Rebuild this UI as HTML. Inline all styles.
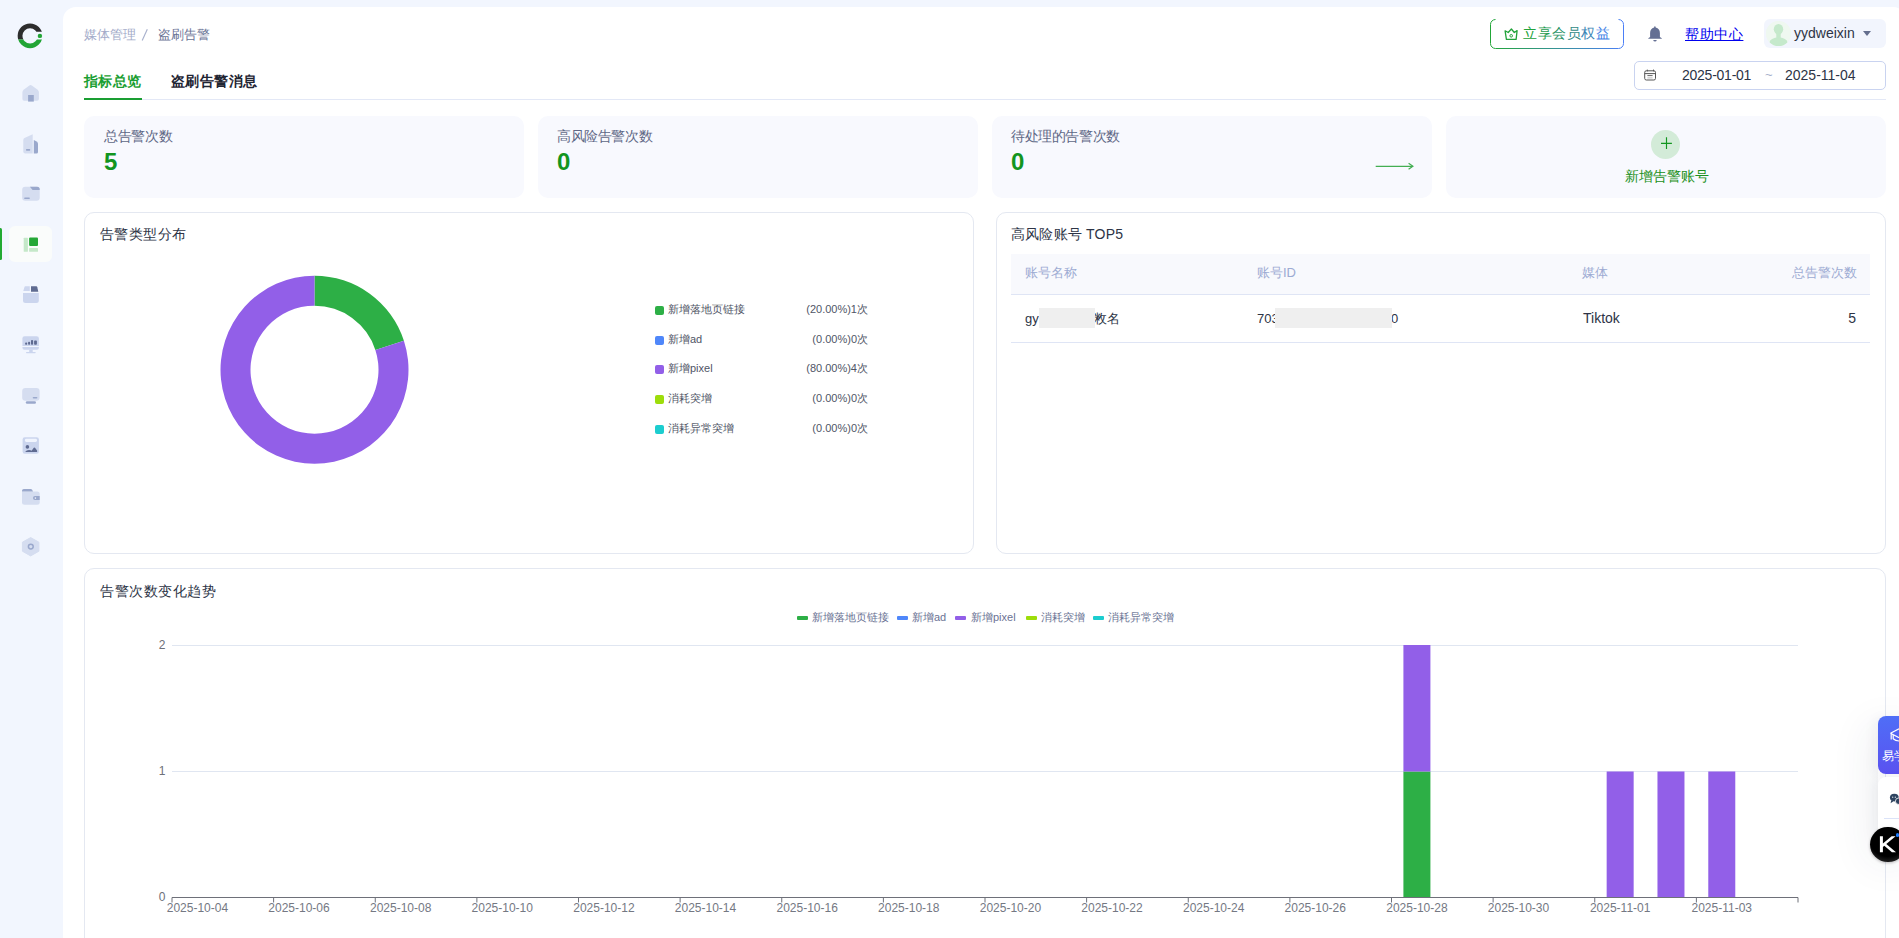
<!DOCTYPE html>
<html><head><meta charset="utf-8">
<style>
*{box-sizing:border-box;margin:0;padding:0}
html,body{width:1899px;height:938px;overflow:hidden}
body{background:#f2f6fe;font-family:"Liberation Sans",sans-serif;position:relative;color:#2d3446}
.a{position:absolute;white-space:nowrap}
.panel{position:absolute;left:63px;top:7px;width:1843px;height:1000px;background:#fff;border-radius:13px}
.card{position:absolute;background:#f8f9fe;border-radius:10px}
.box{position:absolute;background:#fff;border:1px solid #e4e8f1;border-radius:10px}
.t14{font-size:14px;line-height:14px}
.t13{font-size:13px;line-height:13px}
.t12{font-size:12px;line-height:12px}
.t11{font-size:11px;line-height:11px}
.xl{top:902px;width:80px;text-align:center;color:#747883}
.yl{right:1733.5px;color:#6e7079}
.lg{top:616px;width:11px;height:4px;border-radius:1px}
.lt{top:612px;color:#6b7394}
</style></head><body>

<!-- active item -->
<div class="a" style="left:9px;top:226px;width:43px;height:36px;background:#fafcfb;border-radius:6px"></div>
<div class="a" style="left:0;top:228px;width:2px;height:32px;background:#22aa33;border-radius:0 1.5px 1.5px 0"></div>

<!-- sidebar -->
<svg class="a" style="left:0;top:0" width="63" height="600" viewBox="0 0 63 600">
  <defs>
    <clipPath id="cd"><rect x="0" y="0" width="63" height="31.8"/><rect x="0" y="31.8" width="35" height="7.6"/></clipPath>
    <clipPath id="cg"><rect x="0" y="39.4" width="63" height="20"/></clipPath>
  </defs>
  <circle cx="30.05" cy="35.85" r="10" fill="none" stroke="#2d2d2d" stroke-width="4.8" clip-path="url(#cd)"/>
  <circle cx="30.05" cy="35.85" r="10" fill="none" stroke="#22a535" stroke-width="4.8" clip-path="url(#cg)"/>
  <circle cx="39.9" cy="35.9" r="2.2" fill="#22a535"/>
  <!-- home -->
  <path d="M22.4 92.4 Q22.4 90.8 23.6 89.8 L29.4 85.4 Q30.6 84.6 31.8 85.4 L37.7 89.8 Q38.9 90.8 38.9 92.4 L38.9 99 Q38.9 100.8 37.1 100.8 L24.2 100.8 Q22.4 100.8 22.4 99 Z" fill="#d5ddf0"/>
  <rect x="28.1" y="95" width="5.7" height="6.6" fill="#9aa8cc"/>
  <!-- building -->
  <path d="M23.3 140 Q23.3 138.6 24.5 138 L32.7 134.2 L32.7 153.6 L25.3 153.6 Q23.3 153.6 23.3 151.6 Z" fill="#d5ddf0"/>
  <path d="M33.8 139.9 L36.6 141.4 Q38 142.2 38 143.6 L38 152 Q38 153.6 36.4 153.6 L33.8 153.6 Z" fill="#9aa8cc"/>
  <rect x="26" y="149" width="4.2" height="1.7" rx="0.6" fill="#9aa8cc"/>
  <!-- folder -->
  <rect x="22.2" y="186.8" width="17.5" height="14" rx="3" fill="#d5ddf0"/>
  <path d="M29.9 186.8 L37.2 186.8 Q39.7 186.8 39.7 189.3 L39.7 189.9 L32.6 189.9 Z" fill="#9aa8cc"/>
  <rect x="24.1" y="197.4" width="5.8" height="1.7" rx="0.8" fill="#9aa8cc"/>
  <!-- active -->
  <rect x="23.7" y="237.7" width="4.2" height="14.1" rx="0.6" fill="#c5e8c9"/>
  <rect x="29.1" y="237.5" width="8.9" height="8.5" rx="1" fill="#25a737"/>
  <rect x="29.1" y="248" width="8.9" height="3.8" rx="0.6" fill="#c5e8c9"/>
  <!-- box -->
  <path d="M25.2 286.2 L29.8 286.2 L29.8 291.1 L23.3 291.1 L24.4 287.3 Q24.7 286.2 25.2 286.2 Z" fill="#cdd6ee"/>
  <path d="M31 286.2 L36.4 286.2 Q37 286.2 37.3 287.2 L38.3 291.8 L31 291.8 Z" fill="#5f6b91"/>
  <path d="M23 293.1 L38.8 293.1 L38.8 300.5 Q38.8 303 36.3 303 L25.5 303 Q23 303 23 300.5 Z" fill="#cbd5ee"/>
  <!-- monitor chart -->
  <path d="M24.6 336.2 L36.7 336.2 Q38.9 336.2 38.9 338.4 L38.9 345.9 L22.4 345.9 L22.4 338.4 Q22.4 336.2 24.6 336.2 Z" fill="#cbd5ee"/>
  <path d="M22.4 347.1 L38.9 347.1 L38.9 347.7 Q38.9 349.7 36.9 349.7 L24.4 349.7 Q22.4 349.7 22.4 347.7 Z" fill="#cbd5ee"/>
  <rect x="29.2" y="349.7" width="3.5" height="2.5" fill="#cbd5ee"/>
  <rect x="26" y="352" width="9.7" height="1.2" rx="0.6" fill="#cbd5ee"/>
  <rect x="25.1" y="342.6" width="2.1" height="2.2" rx="0.8" fill="#5f6b91"/>
  <rect x="28.1" y="341.8" width="2" height="3" rx="0.8" fill="#5f6b91"/>
  <rect x="31" y="340" width="2.1" height="4.8" rx="0.8" fill="#5f6b91"/>
  <rect x="34.1" y="340.6" width="2.8" height="4.2" rx="0.8" fill="#5f6b91"/>
  <!-- monitor -->
  <rect x="22.2" y="387.9" width="17.4" height="12.8" rx="3.2" fill="#d5ddf0"/>
  <rect x="32.7" y="396.9" width="4.7" height="1.6" rx="0.8" fill="#9aa8cc"/>
  <rect x="25.8" y="401.2" width="10.2" height="2.6" rx="1.3" fill="#9aa8cc"/>
  <!-- image -->
  <rect x="22.6" y="437.3" width="16.3" height="16.5" rx="2.2" fill="#cbd5ee"/>
  <rect x="24.9" y="438.8" width="12.1" height="3.1" rx="1.4" fill="#f1f5fe"/>
  <circle cx="27.4" cy="446.9" r="1.8" fill="#5f6b91"/>
  <path d="M25.1 451.9 Q26.5 450 29 450 Q30.8 450 31.6 450.8 L33.8 447.8 Q34.4 447.2 35 447.8 L37.1 450.6 L37.1 451.9 Z" fill="#5f6b91"/>
  <!-- wallet -->
  <path d="M22 491.4 L22 502.3 Q22 504.8 24.5 504.8 L37.2 504.8 Q39.7 504.8 39.7 502.3 L39.7 493.9 Q39.7 491.4 37.2 491.4 Z" fill="#d5ddf0"/>
  <path d="M22 491.4 L22 490.8 Q22 489 23.8 489 L30.8 489 Q31.6 489 32.1 489.8 L33 491.4 Z" fill="#9aa8cc"/>
  <path d="M35 496 L39.7 496 L39.7 500.1 L35 500.1 Q33 500.1 33 498.05 Q33 496 35 496 Z" fill="#9aa8cc"/>
  <circle cx="35.4" cy="498.1" r="0.8" fill="#eef2fb"/>
  <!-- hexagon -->
  <path d="M30.65 537.6 L38.9 542.2 L38.9 551.2 L30.65 555.9 L22.4 551.2 L22.4 542.2 Z" fill="#d5ddf0" stroke="#d5ddf0" stroke-width="1" stroke-linejoin="round"/>
  <circle cx="30.8" cy="546.6" r="2.4" fill="none" stroke="#9aa8cc" stroke-width="1.5"/>
</svg>

<!-- main panel -->
<div class="panel"></div>

<!-- breadcrumb -->
<div class="a t13" style="left:84px;top:27.5px;color:#a3abc9">媒体管理</div>
<svg class="a" style="left:138px;top:26px" width="14" height="18" viewBox="138 26 14 18"><path d="M147.3 29.2 L142.2 40.6" stroke="#a8b0cc" stroke-width="1.15"/></svg>
<div class="a t13" style="left:158px;top:27.5px;color:#6a7395">盗刷告警</div>

<!-- tabs -->
<div class="a t14" style="letter-spacing:0.45px;left:84px;top:73.5px;color:#1a9e32;font-weight:bold">指标总览</div>
<div class="a t14" style="letter-spacing:0.45px;left:171px;top:73.5px;color:#1f2533;font-weight:bold">盗刷告警消息</div>
<div class="a" style="left:84px;top:99px;width:1802px;height:1px;background:#e3e8f6"></div>
<div class="a" style="left:84px;top:98px;width:58px;height:2px;background:#1a9e32"></div>

<!-- header right -->
<svg class="a" style="left:1488px;top:17px" width="140" height="34" viewBox="1488 17 140 34">
  <defs><linearGradient id="bg1" x1="0" x2="1" y1="0" y2="0"><stop offset="0" stop-color="#22a638"/><stop offset="1" stop-color="#4b7ff7"/></linearGradient></defs>
  <path d="M1495.5 19.5 A5 5 0 0 0 1490.5 24.5 V43.5 A5 5 0 0 0 1495.5 48.5 H1618.5 A5 5 0 0 0 1623.5 43.5 V24.5 A5 5 0 0 0 1618.5 19.5" fill="none" stroke="url(#bg1)" stroke-width="1"/>
</svg>
<div class="a t14" style="left:1523px;top:26px;letter-spacing:0.5px"><span style="color:#22a23a">立</span><span style="color:#259b50">享</span><span style="color:#2a9366">会</span><span style="color:#318a86">员</span><span style="color:#3884b4">权</span><span style="color:#4181e6">益</span></div>

<div class="a t14" style="letter-spacing:0.6px;left:1685px;top:27px;color:#0000ee;text-decoration:underline">帮助中心</div>
<div class="a" style="left:1764px;top:19px;width:122px;height:29px;background:#f2f5fd;border-radius:6px"></div>
<div class="a" style="left:1766px;top:21px;width:25px;height:25px;border-radius:50%;background:#eef8ef"></div>
<div class="a t14" style="left:1794px;top:26px;color:#2d3446">yydweixin</div>
<div class="a" style="left:1863px;top:31px;width:0;height:0;border-left:4.5px solid transparent;border-right:4.5px solid transparent;border-top:5px solid #646e8e"></div>

<!-- date picker -->
<div class="a" style="left:1634px;top:61px;width:252px;height:29px;border:1px solid #c9d3f0;border-radius:5px"></div>
<div class="a t14" style="letter-spacing:-0.25px;left:1682px;top:68px;color:#2d3446">2025-01-01</div>
<div class="a t13" style="left:1765px;top:68px;color:#a6b0cc">~</div>
<div class="a t14" style="letter-spacing:0px;left:1785px;top:68px;color:#2d3446">2025-11-04</div>

<!-- stat cards -->
<div class="card" style="left:84px;top:116px;width:440px;height:82px"></div>
<div class="card" style="left:538px;top:116px;width:440px;height:82px"></div>
<div class="card" style="left:992px;top:116px;width:440px;height:82px"></div>
<div class="card" style="left:1446px;top:116px;width:440px;height:82px"></div>

<div class="a t14" style="letter-spacing:-0.33px;left:104px;top:128.5px;color:#5f6886">总告警次数</div>
<div class="a" style="left:104px;top:150px;font-size:24px;line-height:24px;font-weight:bold;color:#12951f">5</div>
<div class="a t14" style="letter-spacing:-0.38px;left:557px;top:128.5px;color:#5f6886">高风险告警次数</div>
<div class="a" style="left:557px;top:150px;font-size:24px;line-height:24px;font-weight:bold;color:#12951f">0</div>
<div class="a t14" style="letter-spacing:-0.38px;left:1011px;top:128.5px;color:#5f6886">待处理的告警次数</div>
<div class="a" style="left:1011px;top:150px;font-size:24px;line-height:24px;font-weight:bold;color:#12951f">0</div>

<!-- chart boxes -->
<div class="box" style="left:84px;top:212px;width:890px;height:342px"></div>
<div class="box" style="left:996px;top:212px;width:890px;height:342px"></div>
<div class="box" style="left:84px;top:568px;width:1802px;height:400px"></div>

<div class="a t14" style="letter-spacing:0.42px;left:100px;top:226.5px;color:#2d3446">告警类型分布</div>
<div class="a t14" style="letter-spacing:0.2px;left:1011px;top:226.5px;color:#2d3446">高风险账号 TOP5</div>
<div class="a t14" style="letter-spacing:0.5px;left:100px;top:583.5px;color:#2d3446">告警次数变化趋势</div>


<!-- card extras -->
<svg class="a" style="left:1370px;top:158px" width="50" height="16" viewBox="1370 158 50 16">
  <path d="M1375.7 166.3 L1412.5 166.3" stroke="#43ae52" stroke-width="1.2"/>
  <path d="M1408.6 163.3 L1412.9 166.3 L1408.6 169.3" fill="none" stroke="#43ae52" stroke-width="1.2"/>
</svg>
<div class="a" style="left:1651px;top:130px;width:29px;height:29px;border-radius:50%;background:#d3ebd8"></div>
<svg class="a" style="left:1651px;top:130px" width="29" height="29" viewBox="0 0 29 29">
  <path d="M15.5 7.2 V18.9 M10 13.4 H20.9" stroke="#12961f" stroke-width="1.15"/>
</svg>
<div class="a t14" style="left:1625px;top:169px;color:#1a9020">新增告警账号</div>

<!-- donut -->
<svg class="a" style="left:200px;top:260px" width="230" height="220" viewBox="200 260 230 220">
  <path d="M314.5 275.7 A94 94 0 0 1 403.9 340.65 L375.37 349.92 A64 64 0 0 0 314.5 305.7 Z" fill="#2daf46"/>
  <path d="M403.9 340.65 A94 94 0 1 1 314.5 275.7 L314.5 305.7 A64 64 0 1 0 375.37 349.92 Z" fill="#925fe8"/>
</svg>
<!-- legend -->
<div class="a" style="left:655px;top:306px;width:9px;height:9px;border-radius:2px;background:#2daf46"></div>
<div class="a" style="left:655px;top:336px;width:9px;height:9px;border-radius:2px;background:#4f87fa"></div>
<div class="a" style="left:655px;top:365px;width:9px;height:9px;border-radius:2px;background:#925fe8"></div>
<div class="a" style="left:655px;top:395px;width:9px;height:9px;border-radius:2px;background:#9ddd0a"></div>
<div class="a" style="left:655px;top:425px;width:9px;height:9px;border-radius:2px;background:#1ccdcf"></div>
<div class="a t11" style="left:668px;top:304px;color:#505566">新增落地页链接</div>
<div class="a t11" style="left:668px;top:334px;color:#505566">新增ad</div>
<div class="a t11" style="left:668px;top:363px;color:#505566">新增pixel</div>
<div class="a t11" style="left:668px;top:393px;color:#505566">消耗突增</div>
<div class="a t11" style="left:668px;top:423px;color:#505566">消耗异常突增</div>
<div class="a t11" style="right:1031px;top:304px;color:#505566">(20.00%)1次</div>
<div class="a t11" style="right:1031px;top:334px;color:#505566">(0.00%)0次</div>
<div class="a t11" style="right:1031px;top:363px;color:#505566">(80.00%)4次</div>
<div class="a t11" style="right:1031px;top:393px;color:#505566">(0.00%)0次</div>
<div class="a t11" style="right:1031px;top:423px;color:#505566">(0.00%)0次</div>

<!-- table -->
<div class="a" style="left:1011px;top:253.5px;width:859px;height:41px;background:#f8f9fd;border-bottom:1px solid #dfe5f5"></div>
<div class="a" style="left:1011px;top:342px;width:859px;height:1px;background:#dfe5f5"></div>
<div class="a t13" style="left:1025px;top:266px;color:#9dabd3">账号名称</div>
<div class="a t13" style="left:1257px;top:266px;color:#9dabd3">账号ID</div>
<div class="a t13" style="left:1582px;top:266px;color:#9dabd3">媒体</div>
<div class="a t13" style="right:42px;top:266px;color:#9dabd3">总告警次数</div>
<div class="a t13" style="left:1025px;top:312px;color:#2d3446">gy</div>
<div class="a t13" style="left:1094px;top:312px;color:#2d3446">敉名</div>
<div class="a" style="left:1039px;top:308px;width:56px;height:20px;background:#efefef"></div>
<div class="a t13" style="left:1257px;top:312px;color:#2d3446">703</div>
<div class="a t13" style="left:1391px;top:312px;color:#2d3446">0</div>
<div class="a" style="left:1275px;top:308px;width:117px;height:20px;background:#efefef"></div>
<div class="a t14" style="left:1583px;top:311px;color:#2d3446">Tiktok</div>
<div class="a t14" style="right:43px;top:311px;color:#2d3446">5</div>

<!-- trend chart -->
<svg class="a" style="left:0;top:560px" width="1899" height="378" viewBox="0 560 1899 378">
<path d="M172.0 645.5 H1798.0 M172.0 771.5 H1798.0" stroke="#e0e6f1" stroke-width="1"/>
<rect x="1403.41" y="771.5" width="27" height="125.5" fill="#2daf46"/>
<rect x="1403.41" y="645" width="27" height="126.5" fill="#925fe8"/>
<rect x="1606.66" y="771.5" width="27" height="125.5" fill="#925fe8"/>
<rect x="1657.47" y="771.5" width="27" height="125.5" fill="#925fe8"/>
<rect x="1708.28" y="771.5" width="27" height="125.5" fill="#925fe8"/>
<path d="M172.0 897.5 H1798.0" stroke="#6e7079" stroke-width="1"/>
<path d="M172.00 897.5 V902.5 M273.62 897.5 V902.5 M375.25 897.5 V902.5 M476.88 897.5 V902.5 M578.50 897.5 V902.5 M680.12 897.5 V902.5 M781.75 897.5 V902.5 M883.38 897.5 V902.5 M985.00 897.5 V902.5 M1086.62 897.5 V902.5 M1188.25 897.5 V902.5 M1289.88 897.5 V902.5 M1391.50 897.5 V902.5 M1493.12 897.5 V902.5 M1594.75 897.5 V902.5 M1696.38 897.5 V902.5 M1798.00 897.5 V902.5 " stroke="#6e7079" stroke-width="1"/>
</svg>
<div class="a t12 xl" style="left:157.41px">2025-10-04</div>
<div class="a t12 xl" style="left:259.03px">2025-10-06</div>
<div class="a t12 xl" style="left:360.66px">2025-10-08</div>
<div class="a t12 xl" style="left:462.28px">2025-10-10</div>
<div class="a t12 xl" style="left:563.91px">2025-10-12</div>
<div class="a t12 xl" style="left:665.53px">2025-10-14</div>
<div class="a t12 xl" style="left:767.16px">2025-10-16</div>
<div class="a t12 xl" style="left:868.78px">2025-10-18</div>
<div class="a t12 xl" style="left:970.41px">2025-10-20</div>
<div class="a t12 xl" style="left:1072.03px">2025-10-22</div>
<div class="a t12 xl" style="left:1173.66px">2025-10-24</div>
<div class="a t12 xl" style="left:1275.28px">2025-10-26</div>
<div class="a t12 xl" style="left:1376.91px">2025-10-28</div>
<div class="a t12 xl" style="left:1478.53px">2025-10-30</div>
<div class="a t12 xl" style="left:1580.16px">2025-11-01</div>
<div class="a t12 xl" style="left:1681.78px">2025-11-03</div>
<div class="a t12 yl" style="top:638.5px">2</div>
<div class="a t12 yl" style="top:764.5px">1</div>
<div class="a t12 yl" style="top:890.5px">0</div>
<!-- trend legend -->
<div class="a lg" style="left:797px;background:#2daf46"></div>
<div class="a lg" style="left:897px;background:#4f87fa"></div>
<div class="a lg" style="left:955px;background:#925fe8"></div>
<div class="a lg" style="left:1026px;background:#9ddd0a"></div>
<div class="a lg" style="left:1093px;background:#1ccdcf"></div>
<div class="a t11 lt" style="left:812px">新增落地页链接</div>
<div class="a t11 lt" style="left:912px">新增ad</div>
<div class="a t11 lt" style="left:971px">新增pixel</div>
<div class="a t11 lt" style="left:1041px">消耗突增</div>
<div class="a t11 lt" style="left:1108px">消耗异常突增</div>

<!-- header icons -->
<svg class="a" style="left:1500px;top:22px" width="24" height="24" viewBox="1500 22 24 24">
  <path d="M1505.1 30.8 L1508.2 32.5 L1511.4 29 L1514.3 32.5 L1517.1 30.6 L1516.1 39.4 L1506.4 39.4 Z" fill="none" stroke="#22a33a" stroke-width="1.3" stroke-linejoin="round"/>
  <circle cx="1511.2" cy="35.8" r="1.3" fill="none" stroke="#22a33a" stroke-width="1"/>
</svg>
<svg class="a" style="left:1643px;top:22px" width="24" height="24" viewBox="1643 22 24 24">
  <path d="M1654.9 26.2 Q1655.6 26.2 1655.7 27.4 Q1659.9 28.6 1659.9 33 L1659.9 37 L1661.8 38.2 L1661.8 38.7 L1648.3 38.7 L1648.3 38.2 L1650.1 37 L1650.1 33 Q1650.1 28.6 1654.1 27.4 Q1654.2 26.2 1654.9 26.2 Z" fill="#646f93"/>
  <path d="M1653.2 39.9 L1656.8 39.9 Q1656.4 41.5 1655 41.5 Q1653.6 41.5 1653.2 39.9 Z" fill="#646f93"/>
</svg>
<svg class="a" style="left:1762px;top:19px" width="32" height="32" viewBox="1762 19 32 32">
  <defs><clipPath id="av"><circle cx="1778.55" cy="33.6" r="12.45"/></clipPath></defs>
  <circle cx="1778.55" cy="33.6" r="12.45" fill="#eff8f0"/>
  <g clip-path="url(#av)" fill="#c5e9cb">
    <ellipse cx="1778.5" cy="29.2" rx="4.7" ry="5.3"/>
    <rect x="1776.3" y="32" width="4.4" height="6"/>
    <ellipse cx="1778.5" cy="42.4" rx="9" ry="4.8"/>
  </g>
</svg>
<svg class="a" style="left:1640px;top:64px" width="22" height="22" viewBox="1640 64 22 22">
  <rect x="1644.7" y="70.8" width="10.8" height="9.2" rx="1.6" fill="none" stroke="#555" stroke-width="1"/>
  <path d="M1644.7 73.6 H1655.5" stroke="#555" stroke-width="1"/>
  <path d="M1647.4 75.6 H1652.6" stroke="#555" stroke-width="0.9"/>
  <path d="M1647.4 77.9 H1652.6" stroke="#aaa" stroke-width="0.8"/>
  <path d="M1647.3 69.6 V71.4 M1653.5 69.6 V71.4" stroke="#555" stroke-width="1"/>
</svg>

<!-- floating widgets -->
<div class="a" style="left:1878px;top:720px;width:40px;height:140px;border-radius:8px;box-shadow:-10px 4px 40px rgba(40,50,90,0.07)"></div>
<div class="a" style="left:1878px;top:716px;width:40px;height:58px;border-radius:8px;background:linear-gradient(180deg,#4f6ef7,#5a52f0);box-shadow:-4px 2px 12px rgba(30,40,80,0.05)"></div>
<svg class="a" style="left:1878px;top:716px" width="21" height="58" viewBox="1878 716 21 58">
  <path d="M1890.5 733.2 L1899 728.8 M1890.5 733.2 L1899 737.6" fill="none" stroke="#fff" stroke-width="1.2"/>
  <path d="M1891.2 733.6 L1891.2 739.5" fill="none" stroke="#fff" stroke-width="1.2"/>
  <path d="M1893.2 735 L1893.2 738.8 Q1895.5 741 1899 741" fill="none" stroke="#fff" stroke-width="1.2"/>
</svg>
<div class="a" style="left:1881.5px;top:749px;font-size:12px;line-height:14px;color:#fff">易学</div>
<div class="a" style="left:1878px;top:777px;width:40px;height:62px;border-radius:8px;background:#fff;box-shadow:-4px 2px 12px rgba(30,40,80,0.05)"></div>
<div class="a" style="left:1884px;top:818px;width:20px;height:1px;background:#dbe3f8"></div>
<svg class="a" style="left:1886px;top:790px" width="13" height="18" viewBox="1886 790 13 18">
  <ellipse cx="1894.3" cy="797.6" rx="4.4" ry="3.8" fill="#2e4460"/>
  <path d="M1891.2 800.2 L1890.6 803.2 L1893.4 801.2 Z" fill="#2e4460"/>
  <ellipse cx="1899" cy="801.2" rx="3.6" ry="3.3" fill="#2e4460" stroke="#fff" stroke-width="0.8"/>
  <circle cx="1892.7" cy="797.2" r="0.6" fill="#fff"/><circle cx="1895.3" cy="797.2" r="0.6" fill="#fff"/>
</svg>
<div class="a" style="left:1870.2px;top:826.5px;width:35.5px;height:35.5px;border-radius:50%;background:radial-gradient(circle at 50% 30%,#000 62%,#222 82%,#666 100%);box-shadow:0 1px 3px rgba(0,0,0,0.25)"></div>
<svg class="a" style="left:1876px;top:832px" width="23" height="24" viewBox="1876 832 23 24">
  <path d="M1879.9 836.3 H1882.9 V843.6 L1891.6 836.3 H1895.6 L1886.3 843.9 L1896 852.3 H1891.9 L1884.3 845.7 L1882.9 846.9 V852.3 H1879.9 Z" fill="#fff"/>
</svg>
<div class="a" style="left:1895.8px;top:833px;width:3.6px;height:3.6px;border-radius:50%;background:#1d7cff"></div>
</body></html>
